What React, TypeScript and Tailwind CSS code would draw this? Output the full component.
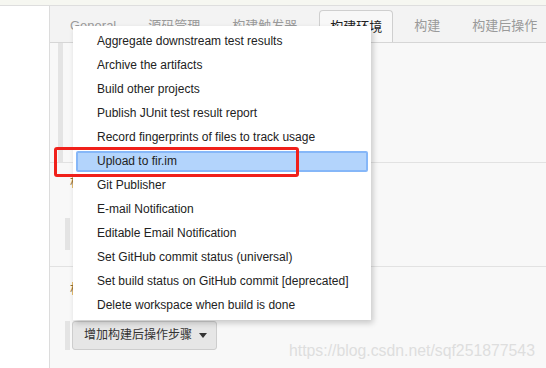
import React from 'react';

const tabs = [
  { name: 'General', active: false },
  { name: '源码管理', active: false },
  { name: '构建触发器', active: false },
  { name: '构建环境', active: true },
  { name: '构建', active: false },
  { name: '构建后操作', active: false },
];

const items = [
  'Aggregate downstream test results',
  'Archive the artifacts',
  'Build other projects',
  'Publish JUnit test result report',
  'Record fingerprints of files to track usage',
  'Upload to fir.im',
  'Git Publisher',
  'E-mail Notification',
  'Editable Email Notification',
  'Set GitHub commit status (universal)',
  'Set build status on GitHub commit [deprecated]',
  'Delete workspace when build is done',
];

const App: React.FC = () => {
  return (
    <div className="relative w-[546px] h-[368px] overflow-hidden bg-white font-['Liberation_Sans','Noto_Sans_CJK_SC',sans-serif] text-[#333]">
      <div className="h-[6px] bg-[#f6f7f1] border-b border-[#dedede]" />
      <div className="flex h-[362px]">
        <div className="w-[50px] shrink-0 bg-white border-r border-[#dcdcdc]" />
        <main className="flex-1 min-w-0 flex flex-col bg-[#f8f8f8]">
          {/* tab bar */}
          <div className="h-[37px] flex items-end pl-[10px] bg-[#f3f3f3] border-b border-[#d6d6d6] overflow-hidden">
            {tabs.map((t) => (
              <div
                key={t.name}
                className={
                  t.active
                    ? 'shrink-0 whitespace-nowrap h-[33px] px-[10px] mr-[11px] -mb-px flex items-center text-[13px] text-[#222] bg-[#f8f8f8] border border-b-0 border-[#cfcfcf] rounded-t-[4px]'
                    : 'shrink-0 whitespace-nowrap h-[33px] px-[10px] mr-[12px] flex items-center text-[13px] text-[#9a9a9a]'
                }
              >
                {t.name}
              </div>
            ))}
          </div>

          {/* content behind menu */}
          <div className="h-[120px] border-b border-[#e2e2e2] flex pl-[8px]">
            <div className="w-[5px] bg-[#e4e4e4]" />
          </div>
          <div className="h-[104px] border-b border-[#e2e2e2] flex flex-col pl-[15px] pt-[9px]">
            <span className="pl-[5px] text-[13px] text-[#8a6d3b]">构</span>
            <div className="mt-[26px] w-[5px] h-[32px] bg-[#e4e4e4]" />
          </div>
          <div className="flex flex-col pl-[15px] pt-[12px]">
            <span className="pl-[5px] text-[13px] text-[#8a6d3b]">构</span>
            <div className="mt-[22px] flex items-stretch">
              <div className="w-[5px] bg-[#e4e4e4]" />
              <button className="ml-[2px] h-[29px] pl-[11px] pr-[9px] flex items-center gap-[7px] text-[12px] text-[#333] bg-[#e6e6e6] border border-[#cdcdcd] rounded-[3px]">
                增加构建后操作步骤
                <svg width="8" height="5" viewBox="0 0 8 5">
                  <path d="M0 0h8L4 5z" fill="#333" />
                </svg>
              </button>
            </div>
          </div>
        </main>
      </div>

      {/* dropdown menu */}
      <div className="absolute left-[73px] top-[26px] w-[298px] py-[3px] bg-white shadow-[2px_3px_6px_rgba(0,0,0,0.2)] z-10">
        {items.map((it) => (
          <div key={it} className="h-[24px] px-[3px] flex items-center">
            <div
              className={
                it === 'Upload to fir.im'
                  ? 'w-full h-[21px] pl-[19px] flex items-center text-[12px] text-[#222] bg-[#b3d4fc] border-2 border-[#86b7f8] rounded-[2px]'
                  : 'w-full h-[21px] pl-[21px] flex items-center text-[12px] text-[#222]'
              }
            >
              {it}
            </div>
          </div>
        ))}
      </div>

      {/* annotation */}
      <div className="absolute left-[54px] top-[147px] w-[245px] h-[30px] border-[3px] border-[#f0201a] rounded-[3px] z-20" />

      {/* watermark */}
      <div className="absolute left-[289px] top-[339px] text-[15.8px] text-[#dedede] z-20">
        https://blog.csdn.net/sqf251877543
      </div>
    </div>
  );
};

export default App;
